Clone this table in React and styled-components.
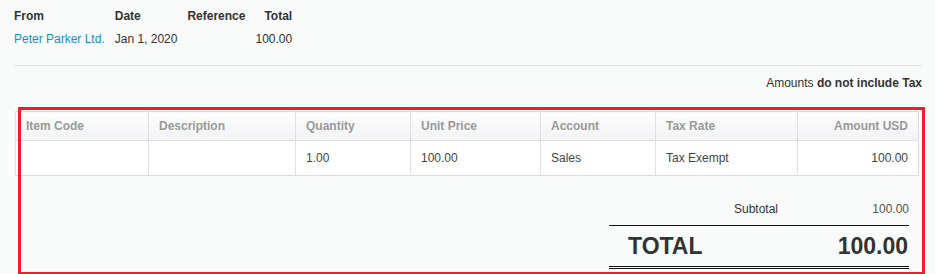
import React from 'react';
import styled, { createGlobalStyle } from 'styled-components';

const GlobalStyle = createGlobalStyle`
    html, body {
        margin: 0;
        padding: 0;
        background: #f9fafa;
    }
    body {
        font-family: "Liberation Sans", Arial, sans-serif;
        font-size: 12px;
        line-height: 16px;
        color: #333;
    }
`;

const Page = styled.div`
    padding: 8px 13px 0 14px;
`;

const Summary = styled.div`
    display: grid;
    grid-template-columns: auto auto auto auto;
    justify-content: start;
    column-gap: 10px;
    row-gap: 7px;
`;

const Label = styled.div`
    font-weight: bold;
    color: #333;
    text-align: ${(p) => (p.right ? 'right' : 'left')};
`;

const Value = styled.div`
    color: ${(p) => (p.link ? '#1e8bc3' : '#333')};
    text-align: ${(p) => (p.right ? 'right' : 'left')};
`;

const Divider = styled.hr`
    border: 0;
    border-top: 1px solid #e1e3e3;
    margin: 18px 0 9px;
`;

const TaxNote = styled.div`
    text-align: right;
    color: #333;

    & b {
        font-weight: bold;
    }
`;

const Section = styled.div`
    position: relative;
    margin: 20px 3px 0 1px;
    padding-bottom: 6px;

    &::after {
        content: '';
        position: absolute;
        top: -4px;
        left: 3px;
        right: -6px;
        bottom: 0;
        border: 3px solid #e8212b;
        pointer-events: none;
    }
`;

const Table = styled.table`
    width: 100%;
    border-collapse: collapse;
    table-layout: fixed;
    border: 1px solid #dcdcdc;
    font-size: 12px;
    line-height: 16px;
`;

const Th = styled.th`
    padding: 6px 10px;
    font-weight: bold;
    color: #999;
    text-align: ${(p) => (p.right ? 'right' : 'left')};
    background: linear-gradient(#fdfdfd, #f2f3f4);
    border-left: 1px solid #e1e1e1;
    border-bottom: 1px solid #e1e1e1;
`;

const Td = styled.td`
    padding: 9px 10px;
    color: #444;
    background: #fff;
    text-align: ${(p) => (p.right ? 'right' : 'left')};
    border-left: 1px solid #e1e1e1;
`;

const Totals = styled.div`
    width: 300px;
    margin: 25px 10px 0 auto;
`;

const SubtotalRow = styled.div`
    display: grid;
    grid-template-columns: 1fr 130px;
    padding-bottom: 8px;
    border-bottom: 1px solid #111;
`;

const SubLabel = styled.div`
    text-align: right;
    padding-right: 1px;
    color: #333;
`;

const SubValue = styled.div`
    text-align: right;
    color: #555;
`;

const TotalRow = styled.div`
    display: flex;
    justify-content: space-between;
    padding: 7px 1px 7px 19px;
    font-size: 23px;
    line-height: 26px;
    font-weight: bold;
    color: #333;
    border-bottom: 3px double #111;
`;

const columns = [
    { key: 'code', label: 'Item Code', width: 133 },
    { key: 'desc', label: 'Description', width: 147 },
    { key: 'qty', label: 'Quantity', width: 115 },
    { key: 'price', label: 'Unit Price', width: 130 },
    { key: 'account', label: 'Account', width: 115 },
    { key: 'tax', label: 'Tax Rate', width: 142 },
    { key: 'amount', label: 'Amount USD', right: true },
];

const lines = [
    { code: '', desc: '', qty: '1.00', price: '100.00', account: 'Sales', tax: 'Tax Exempt', amount: '100.00' },
];

const App = () => {
    return (
        <Page>
            <GlobalStyle />
            <Summary>
                <Label>From</Label>
                <Label>Date</Label>
                <Label>Reference</Label>
                <Label right>Total</Label>
                <Value link>Peter Parker Ltd.</Value>
                <Value>Jan 1, 2020</Value>
                <Value />
                <Value right>100.00</Value>
            </Summary>
            <Divider />
            <TaxNote>
                Amounts <b>do not include Tax</b>
            </TaxNote>
            <Section>
                <Table>
                    <colgroup>
                        {columns.map((c) => (
                            <col key={c.key} style={c.width ? { width: c.width } : undefined} />
                        ))}
                    </colgroup>
                    <thead>
                        <tr>
                            {columns.map((c) => (
                                <Th key={c.key} right={c.right}>
                                    {c.label}
                                </Th>
                            ))}
                        </tr>
                    </thead>
                    <tbody>
                        {lines.map((line, i) => (
                            <tr key={i}>
                                {columns.map((c) => (
                                    <Td key={c.key} right={c.right}>
                                        {line[c.key]}
                                    </Td>
                                ))}
                            </tr>
                        ))}
                    </tbody>
                </Table>
                <Totals>
                    <SubtotalRow>
                        <SubLabel>Subtotal</SubLabel>
                        <SubValue>100.00</SubValue>
                    </SubtotalRow>
                    <TotalRow>
                        <span>TOTAL</span>
                        <span>100.00</span>
                    </TotalRow>
                </Totals>
            </Section>
        </Page>
    );
};

export default App;
